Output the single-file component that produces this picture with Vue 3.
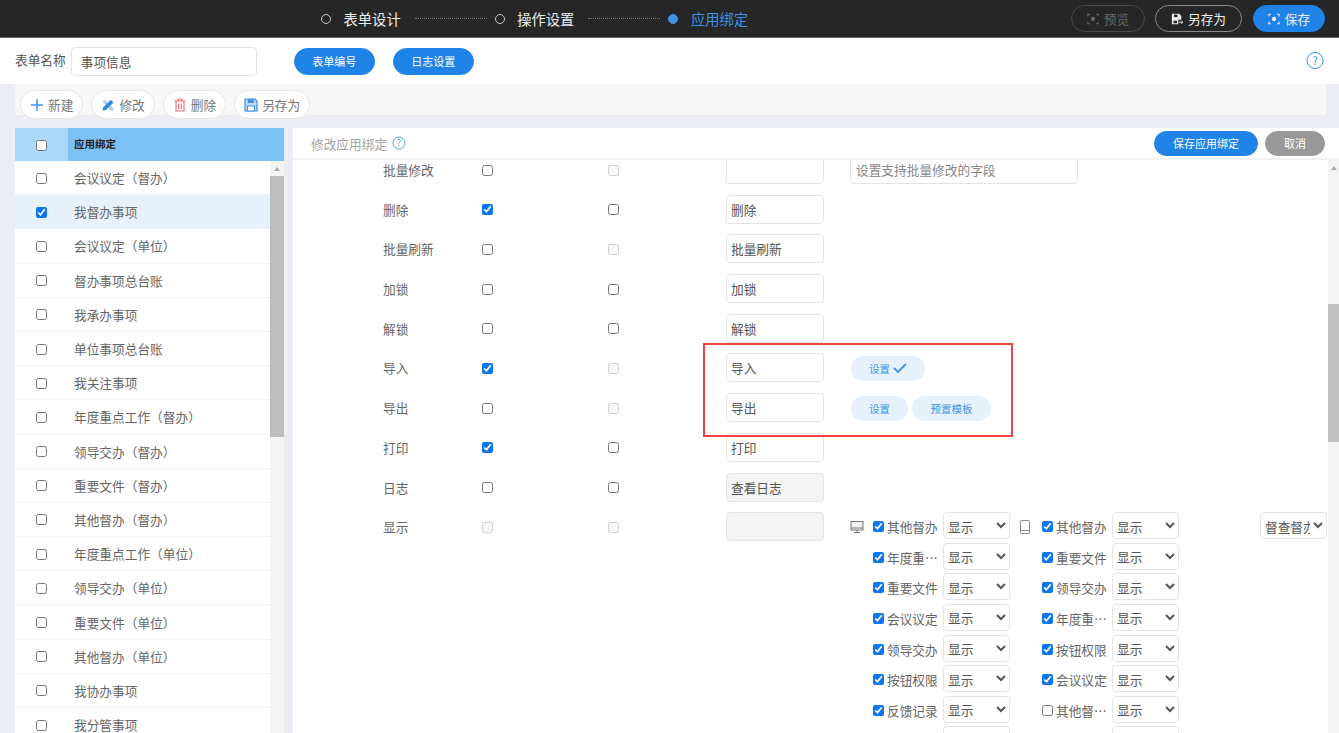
<template>
  <div class="page">
    <!-- 顶部步骤条 -->
    <header class="topbar">
      <div class="steps">
        <template v-for="(step, i) in steps" :key="step.name">
          <span class="step-dot" :class="{ active: step.active }"></span>
          <span class="step-name" :class="{ active: step.active }">{{ step.name }}</span>
          <span v-if="i < steps.length - 1" class="step-line"></span>
        </template>
      </div>
      <div class="top-actions">
        <button class="top-btn preview">
          <svg viewBox="0 0 14 14" class="top-icon"><path d="M1 4V1.500h2.500M10.500 1.500H13V4M13 10v2.500h-2.500M3.500 12.500H1V10" fill="none" stroke="currentColor" stroke-width="1.200"/><circle cx="7" cy="7" r="2.500" fill="currentColor"/></svg>
          预览
        </button>
        <button class="top-btn saveas">
          <svg viewBox="0 0 14 14" class="top-icon"><path d="M1 1h8.500L12 3.500V8H8.500v5H1z" fill="currentColor"/><rect x="3.500" y="1.800" width="4" height="3" fill="#262626"/><rect x="3" y="9" width="4" height="3" fill="#262626"/><path d="M9.500 10.800h4M12 9l1.800 1.800L12 12.600" fill="none" stroke="currentColor" stroke-width="1.100"/></svg>
          另存为
        </button>
        <button class="top-btn save">
          <svg viewBox="0 0 14 14" class="top-icon"><path d="M1 4V1.500h2.500M10.500 1.500H13V4M13 10v2.500h-2.500M3.500 12.500H1V10" fill="none" stroke="currentColor" stroke-width="1.200"/><circle cx="7" cy="7" r="2.500" fill="currentColor"/></svg>
          保存
        </button>
      </div>
    </header>

    <!-- 表单名称 -->
    <section class="formbar">
      <label class="form-label">表单名称</label>
      <input class="form-name" value="事项信息" />
      <button class="pill first">表单编号</button>
      <button class="pill">日志设置</button>
      <svg class="help-big" viewBox="0 0 18 18"><circle cx="9" cy="9" r="8" fill="none" stroke="#3d93e8" stroke-width="1"/><text x="9" y="13" text-anchor="middle" font-size="11" fill="#3d93e8">?</text></svg>
    </section>

    <!-- 工具栏 -->
    <section class="toolbar">
      <button class="tool">
        <svg viewBox="0 0 14 14" class="tool-icon"><path d="M7 1v12M1 7h12" stroke="#3d93e8" stroke-width="1.500" fill="none"/></svg>
        新建
      </button>
      <button class="tool">
        <svg viewBox="0 0 14 14" class="tool-icon"><path d="M1.500 3.500l2-2 9 9-.5 2.500-2.500-.5z" fill="#a9cff5"/><path d="M1.500 12.800l.7-3.300 7.600-7.800 2.700 2.700-7.700 7.700z" fill="#2f86e6"/></svg>
        修改
      </button>
      <button class="tool">
        <svg viewBox="0 0 14 14" class="tool-icon"><path d="M1.500 3h11M5 3V1.300h4V3M3 3.500V13h8V3.500M5.700 5.500v5.500M8.300 5.500v5.500" fill="none" stroke="#ef6f6c" stroke-width="1.100"/></svg>
        删除
      </button>
      <button class="tool">
        <svg viewBox="0 0 14 14" class="tool-icon"><path d="M1 1h10l2 2v10H1z" fill="#b9d8f8" stroke="#3d93e8" stroke-width="1.200"/><rect x="3.800" y="1" width="6" height="4" fill="#3d93e8"/><rect x="3.500" y="8" width="7" height="5" fill="#fff" stroke="#3d93e8"/></svg>
        另存为
      </button>
    </section>

    <main class="content">
      <!-- 左侧列表 -->
      <aside class="list">
        <div class="list-head">
          <div class="head-check"><input type="checkbox" /></div>
          <div class="head-title">应用绑定</div>
        </div>
        <div class="list-body">
          <div class="list-rows">
            <div v-for="item in listItems" :key="item" class="list-row" :class="{ selected: item === selectedItem }">
              <span class="row-check"><input type="checkbox" :checked="item === selectedItem" /></span>
              <span>{{ item }}</span>
            </div>
          </div>
          <div class="list-scroll">
            <span class="arrow"></span>
            <span class="list-thumb"></span>
          </div>
        </div>
      </aside>

      <!-- 右侧绑定设置 -->
      <section class="panel">
        <div class="panel-head">
          <span class="panel-title">修改应用绑定</span>
          <svg class="help-small" viewBox="0 0 14 14"><circle cx="7" cy="7" r="6" fill="none" stroke="#5aa5ec" stroke-width="1"/><text x="7" y="10.300" text-anchor="middle" font-size="9" fill="#5aa5ec">?</text></svg>
          <div class="panel-actions">
            <button class="pill small">保存应用绑定</button>
            <button class="pill small cancel">取消</button>
          </div>
        </div>
        <div class="panel-body">
          <div class="bind-rows">
            <div v-for="row in bindRows" :key="row.label" class="bind-row">
              <span class="cell label">{{ row.label }}</span>
              <span class="cell check"><input type="checkbox" :checked="row.on" :disabled="row.lockOn" /></span>
              <span class="cell check"><input type="checkbox" :disabled="row.lockSub" /></span>
              <input class="name-input" :class="{ readonly: row.readonly }" :value="row.text" />
              <div v-if="row.hint" class="extra">
                <input class="hint-input" :placeholder="row.hint" />
              </div>
              <div v-else-if="row.buttons" class="extra buttons">
                <button v-for="b in row.buttons" :key="b.text" class="soft-btn" :class="{ wide: b.check }">
                  {{ b.text }}
                  <svg v-if="b.check" viewBox="0 0 14 10" class="soft-check"><path d="M1 5l4 4 8-8" fill="none" stroke="#3d93e8" stroke-width="1.800"/></svg>
                </button>
              </div>
              <div v-else-if="row.display" class="extra display">
                <div v-for="(line, n) in displayLines" :key="n" class="display-line">
                  <div v-for="(side, s) in line" :key="s" class="side">
                    <span class="device">
                      <svg v-if="n === 0 && s === 0" viewBox="0 0 14 14" class="device-icon"><rect x="1" y="1.500" width="12" height="8.500" fill="#f2f2f2" stroke="#777" stroke-width="1"/><path d="M1 8h12M7 10v2.500M4 12.500h6" stroke="#777" fill="none"/></svg>
                      <svg v-if="n === 0 && s === 1" viewBox="0 0 14 14" class="device-icon"><rect x="2.500" y="0.500" width="9" height="13" rx="1" fill="none" stroke="#888" stroke-width="1"/><path d="M2.500 10.500h9" stroke="#888"/></svg>
                    </span>
                    <span class="side-check"><input v-if="side" type="checkbox" :checked="side.on" /></span>
                    <span class="side-label">{{ side && side.name }}</span>
                    <select class="side-select"><option>显示</option></select>
                  </div>
                  <select v-if="n === 0" class="side-select far"><option>督查督办</option></select>
                </div>
              </div>
            </div>
          </div>
          <!-- 标注框 -->
          <div class="mark"></div>
          <div class="panel-scroll">
            <span class="arrow"></span>
            <span class="panel-thumb"></span>
          </div>
        </div>
      </section>
    </main>
  </div>
</template>

<script setup>
const steps = [
  { name: '表单设计' },
  { name: '操作设置' },
  { name: '应用绑定', active: true }
]

const selectedItem = '我督办事项'

const listItems = [
  '会议议定（督办）',
  '我督办事项',
  '会议议定（单位）',
  '督办事项总台账',
  '我承办事项',
  '单位事项总台账',
  '我关注事项',
  '年度重点工作（督办）',
  '领导交办（督办）',
  '重要文件（督办）',
  '其他督办（督办）',
  '年度重点工作（单位）',
  '领导交办（单位）',
  '重要文件（单位）',
  '其他督办（单位）',
  '我协办事项',
  '我分管事项'
]

const bindRows = [
  { label: '批量修改', lockSub: true, text: '', hint: '设置支持批量修改的字段' },
  { label: '删除', on: true, text: '删除' },
  { label: '批量刷新', lockSub: true, text: '批量刷新' },
  { label: '加锁', text: '加锁' },
  { label: '解锁', text: '解锁' },
  { label: '导入', on: true, lockSub: true, text: '导入', buttons: [{ text: '设置', check: true }] },
  { label: '导出', lockSub: true, text: '导出', buttons: [{ text: '设置' }, { text: '预置模板' }] },
  { label: '打印', on: true, text: '打印' },
  { label: '日志', text: '查看日志', readonly: true },
  { label: '显示', lockOn: true, lockSub: true, text: '', readonly: true, display: true }
]

const displayLines = [
  [{ name: '其他督办', on: true }, { name: '其他督办', on: true }],
  [{ name: '年度重点工作', on: true }, { name: '重要文件', on: true }],
  [{ name: '重要文件', on: true }, { name: '领导交办', on: true }],
  [{ name: '会议议定', on: true }, { name: '年度重点工作', on: true }],
  [{ name: '领导交办', on: true }, { name: '按钮权限', on: true }],
  [{ name: '按钮权限', on: true }, { name: '会议议定', on: true }],
  [{ name: '反馈记录', on: true }, { name: '其他督办事项', on: false }],
  [null, null]
]
</script>

<style>
html,
body {
  margin: 0;
  overflow: hidden;
}
</style>

<style scoped>
.page {
  height: 733px;
  display: flex;
  flex-direction: column;
  overflow: hidden;
  background: #eceef4;
  color: #555;
  font-family: "Noto Sans CJK SC", "Noto Sans", sans-serif;
  font-size: 12.7px;
}

button {
  font-family: inherit;
  cursor: pointer;
}

input[type="checkbox"] {
  margin: 1px 0 0;
  width: 11px;
  height: 11px;
  accent-color: #0b76f0;
}

.topbar {
  height: 37px;
  flex: none;
  position: relative;
  display: flex;
  align-items: center;
  justify-content: flex-end;
  background: #262626;
  border-bottom: 1px solid #6a6a6a;
}

.steps {
  position: absolute;
  left: 321px;
  top: 0;
  height: 37px;
  display: flex;
  align-items: center;
}

.step-dot {
  width: 10px;
  height: 10px;
  box-sizing: border-box;
  border: 1px solid #ccc;
  border-radius: 50%;
}

.step-dot.active {
  background: #3d93e8;
  border-color: #3d93e8;
}

.step-name {
  margin: -1px 0 0 12.500px;
  font-size: 14.3px;
  color: #eee;
}

.step-name.active {
  color: #3d93e8;
}

.step-line {
  width: 72px;
  margin: 0 8px 0 14px;
  border-top: 1px dotted #777;
}

.top-actions {
  display: flex;
  gap: 10px;
  padding-right: 14px;
}

.top-btn {
  height: 27px;
  box-sizing: border-box;
  padding: 0;
  display: flex;
  align-items: center;
  justify-content: center;
  gap: 5px;
  border-radius: 14px;
  font-size: 12.7px;
  background: transparent;
  color: #eee;
  border: 1px solid #8a8a8a;
}

.top-icon {
  width: 12px;
  height: 12px;
}

.preview {
  width: 74px;
  color: #666;
  border-color: #4a4a4a;
}

.saveas {
  width: 87px;
}

.save {
  width: 72px;
  margin-left: 1px;
  background: #1f83e8;
  border-color: #1f83e8;
}

.formbar {
  height: 46px;
  flex: none;
  display: flex;
  align-items: center;
  padding-left: 15px;
  background: #fff;
  box-sizing: border-box;
  position: relative;
}

.form-label {
  margin-right: 5px;
  margin-top: -3px;
}

.form-name {
  width: 186px;
  height: 29px;
  box-sizing: border-box;
  padding: 0 9px;
  margin-top: 1px;
  border: 1px solid #e4e4e4;
  border-radius: 4px;
  color: #555;
  font: inherit;
  outline: none;
}

.pill {
  width: 81px;
  height: 27px;
  padding: 0;
  border: 1px solid #1f83e8;
  border-radius: 14px;
  background: #1f83e8;
  color: #fff;
  font-size: 11px;
  margin-left: 18px;
}

.pill.first {
  margin-left: 37px;
}

.help-big {
  position: absolute;
  right: 15px;
  top: 13px;
  width: 18px;
  height: 19px;
}

.toolbar {
  height: 44px;
  flex: none;
  display: flex;
  align-items: flex-start;
  gap: 8px;
  box-sizing: border-box;
  padding: 6px 0 0 5px;
  margin: 0 13px 0 15px;
  background: linear-gradient(#f7f7f7 0 31px, #eceef4 31px);
}

.tool {
  height: 29px;
  padding: 0 9px;
  display: flex;
  align-items: center;
  gap: 4px;
  border: 1px solid #e5e5e5;
  border-radius: 15px;
  background: #fff;
  color: #777;
  font-size: 12.7px;
}

.tool-icon {
  width: 14px;
  height: 14px;
}

.content {
  flex: 1;
  min-height: 0;
  display: flex;
  padding-left: 15px;
  gap: 9px;
}

.list {
  width: 269px;
  flex: none;
  display: flex;
  flex-direction: column;
  background: #fff;
}

.list-head {
  height: 33px;
  flex: none;
  display: flex;
  background: #7cc1f5;
}

.head-check {
  width: 53px;
  display: flex;
  align-items: center;
  justify-content: center;
  background: #aad8f9;
}

.head-title {
  padding-left: 6px;
  line-height: 32px;
  font-size: 10.500px;
  font-weight: 700;
  color: #222;
}

.list-body {
  flex: 1;
  min-height: 0;
  display: flex;
}

.list-rows {
  flex: 1;
}

.list-row {
  height: 34.200px;
  box-sizing: border-box;
  display: flex;
  align-items: center;
  border-bottom: 1px solid #f2f2f2;
  color: #666;
}

.list-row.selected {
  background: #e7f1fb;
}

.row-check {
  width: 59px;
  padding-left: 21px;
  box-sizing: border-box;
  display: flex;
}

.list-scroll {
  width: 14px;
  flex: none;
  background: #f4f4f4;
  display: flex;
  flex-direction: column;
  align-items: center;
}

.arrow {
  width: 0;
  height: 0;
  flex: none;
  margin: 6px 0 5px;
  border: 3.500px solid transparent;
  border-top: 0;
  border-bottom: 4px solid #a8a8a8;
}

.list-thumb {
  width: 100%;
  height: 261px;
  background: #bdbdbd;
}

.panel {
  flex: 1;
  min-width: 0;
  display: flex;
  flex-direction: column;
  background: #fff;
}

.panel-head {
  height: 32px;
  flex: none;
  display: flex;
  align-items: center;
  box-sizing: border-box;
  padding: 0 14px 0 18px;
  border-bottom: 2px solid #f1f1f1;
}

.panel-title {
  color: #a3a3a3;
  margin-top: 1px;
}

.help-small {
  width: 14px;
  height: 14px;
  margin-left: 5px;
}

.panel-actions {
  margin-left: auto;
  display: flex;
  gap: 7px;
}

.pill.small {
  margin: 0;
  width: 104px;
  height: 25px;
}

.pill.cancel {
  width: 60px;
  background: #999;
  border-color: #999;
}

.panel-body {
  flex: 1;
  min-height: 0;
  position: relative;
  overflow: hidden;
}

.bind-rows {
  margin-top: -5px;
  padding-left: 90px;
}

.bind-row {
  display: grid;
  grid-template-columns: 98px 126px 119px 98px 1fr;
  align-items: start;
  margin-bottom: 10.700px;
}

.cell {
  height: 29px;
  display: flex;
  align-items: center;
}

.check {
  padding-left: 1px;
}

.label {
  color: #666;
}

.name-input {
  width: 98px;
  height: 29px;
  box-sizing: border-box;
  padding: 0 4px;
  border: 1px solid #e4e4e4;
  border-radius: 4px;
  color: #555;
  font: inherit;
  outline: none;
}

.name-input.readonly {
  background: #f4f4f4;
}

.extra {
  margin-left: 26px;
}

.hint-input {
  width: 228px;
  height: 29px;
  box-sizing: border-box;
  padding: 0 5px;
  border: 1px solid #e4e4e4;
  border-radius: 4px;
  font: inherit;
  outline: none;
}

.hint-input::placeholder {
  color: #888;
}

.buttons {
  height: 28px;
  margin: 1px 0 0 27px;
  display: flex;
  align-items: center;
  gap: 4px;
}

.soft-btn {
  width: 57px;
  height: 25px;
  padding: 0;
  display: flex;
  align-items: center;
  justify-content: center;
  gap: 3px;
  border: none;
  border-radius: 13px;
  background: #e6f1fb;
  color: #3d93e8;
  font-size: 10.500px;
}

.soft-btn:nth-child(2) {
  width: 79px;
}

.soft-btn.wide {
  width: 74px;
}

.soft-check {
  width: 14px;
  height: 10px;
}

.display-line {
  display: flex;
  gap: 9px;
  margin-bottom: 3.600px;
}

.side {
  display: flex;
  align-items: center;
}

.device {
  width: 23px;
  height: 14px;
  flex: none;
  margin-top: 2px;
}

.device-icon {
  width: 14px;
  height: 14px;
  display: block;
}

.side:nth-child(2) .device-icon {
  margin-left: -1px;
}

.side-check {
  width: 14px;
  flex: none;
  display: flex;
  margin-top: 1px;
}

.side-label {
  width: 51px;
  margin: 2px 5px 0 0;
  overflow: hidden;
  white-space: nowrap;
  text-overflow: ellipsis;
  color: #666;
}

.side-select {
  width: 67px;
  height: 27px;
  flex: none;
  box-sizing: border-box;
  padding-top: 1px;
  border: 1px solid #e4e4e4;
  border-radius: 4px;
  background: #fff;
  color: #555;
  font: inherit;
  outline: none;
}

.far {
  margin-left: 72px;
}

.mark {
  position: absolute;
  left: 410px;
  top: 183px;
  width: 310px;
  height: 94px;
  box-sizing: border-box;
  border: 2px solid #ef4444;
  pointer-events: none;
}

.panel-scroll {
  position: absolute;
  right: 0;
  top: 0;
  bottom: 0;
  width: 11px;
  background: #f4f4f4;
  display: flex;
  flex-direction: column;
  align-items: center;
}

.panel-thumb {
  width: 100%;
  height: 138px;
  margin-top: 129px;
  background: #c1c1c1;
}
</style>
